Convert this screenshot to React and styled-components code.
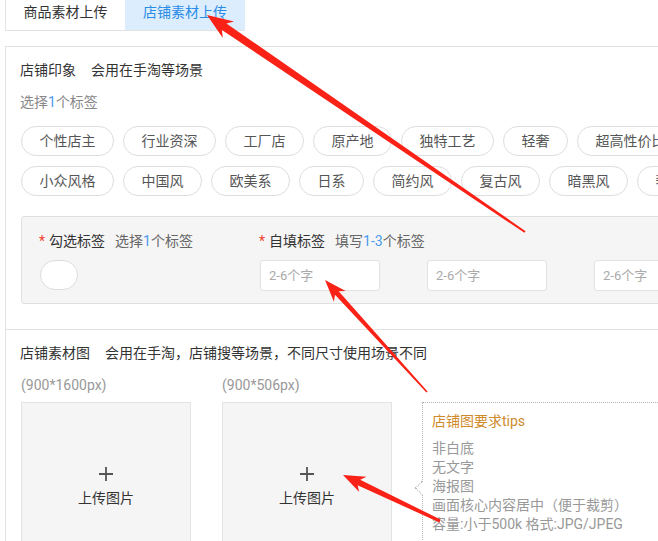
import React from "react";
import styled, { createGlobalStyle } from "styled-components";

const GlobalStyle = createGlobalStyle`
  body {
    margin: 0;
    background: #fff;
    overflow: hidden;
    font-family: Roboto, "Noto Sans CJK SC", sans-serif;
    color: #333;
  }
`;

const tagsRow1 = ["个性店主", "行业资深", "工厂店", "原产地", "独特工艺", "轻奢", "超高性价比"];
const tagsRow2 = ["小众风格", "中国风", "欧美系", "日系", "简约风", "复古风", "暗黑风", "奢华风"];
const tips = ["非白底", "无文字", "海报图", "画面核心内容居中（便于裁剪）", "容量:小于500k 格式:JPG/JPEG"];

// tip point, tail point, shaft width at head / tail
const arrows = [
  { tip: [207, 15], tail: [525, 232], w1: 8, w0: 2, head: 26, half: 10 },
  { tip: [325, 280], tail: [427, 392], w1: 5, w0: 1.5, head: 22, half: 8 },
  { tip: [343, 475], tail: [440, 521], w1: 6, w0: 3, head: 22, half: 8.5 },
];

function arrowPoints({ tip, tail, w1, w0, head, half }) {
  const dx = tail[0] - tip[0];
  const dy = tail[1] - tip[1];
  const len = Math.hypot(dx, dy);
  const ux = dx / len;
  const uy = dy / len;
  const nx = -uy;
  const ny = ux;
  const hb = [tip[0] + ux * head, tip[1] + uy * head];
  const b = [tip[0] + ux * head * 0.8, tip[1] + uy * head * 0.8];
  const pts = [
    tip,
    [hb[0] + nx * half, hb[1] + ny * half],
    [b[0] + (nx * w1) / 2, b[1] + (ny * w1) / 2],
    [tail[0] + (nx * w0) / 2, tail[1] + (ny * w0) / 2],
    [tail[0] - (nx * w0) / 2, tail[1] - (ny * w0) / 2],
    [b[0] - (nx * w1) / 2, b[1] - (ny * w1) / 2],
    [hb[0] - nx * half, hb[1] - ny * half],
  ];
  return pts.map((p) => p.map((v) => v.toFixed(1)).join(",")).join(" ");
}

function App() {
  return (
    <Page>
      <GlobalStyle />
      <TabBar>
        <Tab>商品素材上传</Tab>
        <Tab active>店铺素材上传</Tab>
      </TabBar>

      <Panel>
        <Section>
          <Title>
            店铺印象<Desc>会用在手淘等场景</Desc>
          </Title>
          <Hint>
            选择<Num>1</Num>个标签
          </Hint>
          <TagRows>
            <TagRow>
              {tagsRow1.map((t) => (
                <Tag key={t}>{t}</Tag>
              ))}
            </TagRow>
            <TagRow>
              {tagsRow2.map((t) => (
                <Tag key={t}>{t}</Tag>
              ))}
            </TagRow>
          </TagRows>

          <GrayBox>
            <Field width="220px">
              <Label>
                <Star>*</Star>勾选标签
                <LabelHint>
                  选择<Num>1</Num>个标签
                </LabelHint>
              </Label>
              <Controls>
                <Oval />
              </Controls>
            </Field>
            <Field>
              <Label>
                <Star>*</Star>自填标签
                <LabelHint>
                  填写<Num>1-3</Num>个标签
                </LabelHint>
              </Label>
              <Controls>
                <TextInput placeholder="2-6个字" />
                <TextInput placeholder="2-6个字" />
                <TextInput placeholder="2-6个字" />
              </Controls>
            </Field>
          </GrayBox>
        </Section>

        <Section divided>
          <Title>
            店铺素材图<Desc>会用在手淘，店铺搜等场景，不同尺寸使用场景不同</Desc>
          </Title>
          <Uploads>
            <UploadCol>
              <SizeLabel>(900*1600px)</SizeLabel>
              <UploadBox>
                <PlusIcon />
                <UploadText>上传图片</UploadText>
              </UploadBox>
            </UploadCol>
            <UploadCol>
              <SizeLabel>(900*506px)</SizeLabel>
              <UploadBox>
                <PlusIcon />
                <UploadText>上传图片</UploadText>
              </UploadBox>
            </UploadCol>
            <TipsBox>
              <TipsTitle>店铺图要求tips</TipsTitle>
              <TipsList>
                {tips.map((t) => (
                  <TipLine key={t}>{t}</TipLine>
                ))}
              </TipsList>
            </TipsBox>
          </Uploads>
        </Section>
      </Panel>

      <Overlay width="658" height="541" viewBox="0 0 658 541">
        {arrows.map((a, i) => (
          <polygon key={i} points={arrowPoints(a)} fill="#fa2216" />
        ))}
      </Overlay>
    </Page>
  );
}

function PlusIcon() {
  return (
    <svg width="14" height="14" viewBox="0 0 14 14">
      <path d="M7 0v14M0 7h14" stroke="#555" strokeWidth="1.8" />
    </svg>
  );
}

const Page = styled.div`
  position: relative;
  width: 658px;
  height: 541px;
  overflow: hidden;
  padding-left: 5px;
  box-sizing: border-box;
`;

const TabBar = styled.div`
  display: flex;
  width: 240px;
  height: 31px;
  box-sizing: border-box;
  border-left: 1px solid #e3e3e3;
  border-bottom: 1px solid #e3e3e3;
`;

const Tab = styled.div`
  width: ${(p) => (p.active ? "120px" : "119px")};
  height: 30px;
  line-height: 24px;
  text-align: center;
  font-size: 14px;
  color: ${(p) => (p.active ? "#2b8ce8" : "#333")};
  background: ${(p) => (p.active ? "#dcedfd" : "#fff")};
`;

const Panel = styled.div`
  margin-top: 15px;
  width: 720px;
  border: 1px solid #e3e3e3;
`;

const Section = styled.div`
  padding: 13px 15px 25px 14px;
  border-top: ${(p) => (p.divided ? "1px solid #e3e3e3" : "none")};
`;

const Title = styled.div`
  font-size: 14px;
  line-height: 20px;
  color: #333;
`;

const Desc = styled.span`
  margin-left: 15px;
`;

const Hint = styled.div`
  margin-top: 12px;
  font-size: 14px;
  line-height: 20px;
  color: #888;
`;

const Num = styled.span`
  color: #4a9af0;
`;

const TagRows = styled.div`
  margin-top: 14px;
  padding-left: 1px;
  display: flex;
  flex-direction: column;
  gap: 10px;
`;

const TagRow = styled.div`
  display: flex;
  gap: 9px;
`;

const Tag = styled.div`
  flex-shrink: 0;
  height: 30px;
  box-sizing: border-box;
  padding: 0 17.5px;
  border: 1px solid #dedede;
  border-radius: 15px;
  line-height: 28px;
  font-size: 14px;
  color: #555;
  white-space: nowrap;
`;

const GrayBox = styled.div`
  margin-top: 20px;
  margin-left: 1px;
  display: flex;
  padding: 14px 17px 12px;
  background: #f5f5f5;
  border: 1px solid #e0e0e0;
  border-radius: 3px;
`;

const Field = styled.div`
  width: ${(p) => p.width || "auto"};
  flex-shrink: 0;
`;

const Label = styled.div`
  font-size: 14px;
  line-height: 20px;
  color: #333;
  white-space: nowrap;
`;

const Star = styled.span`
  color: #f0422c;
  margin-right: 4px;
`;

const LabelHint = styled.span`
  margin-left: 10px;
  color: #666;
`;

const Controls = styled.div`
  margin-top: 9px;
  display: flex;
  gap: 46px;
`;

const Oval = styled.div`
  width: 38px;
  height: 30px;
  margin-left: 1px;
  box-sizing: border-box;
  border: 1px solid #dcdcdc;
  border-radius: 15px;
  background: #fff;
`;

const TextInput = styled.input`
  width: 120px;
  height: 31px;
  box-sizing: border-box;
  margin: 0 0 0 1px;
  padding: 0 8px;
  border: 1px solid #e2e2e2;
  border-radius: 3px;
  background: #fff;
  font-family: Roboto, "Noto Sans CJK SC", sans-serif;
  font-size: 13px;
  outline: none;
  &::placeholder {
    color: #aaa;
  }
`;

const Uploads = styled.div`
  margin-top: 12px;
  display: flex;
  gap: 31px;
  padding-left: 1px;
`;

const UploadCol = styled.div`
  width: 170px;
  flex-shrink: 0;
`;

const SizeLabel = styled.div`
  font-size: 14px;
  line-height: 20px;
  color: #999;
`;

const UploadBox = styled.div`
  margin-top: 7px;
  height: 170px;
  box-sizing: border-box;
  border: 1px solid #e3e3e3;
  background: #f5f5f5;
  display: flex;
  flex-direction: column;
  align-items: center;
  justify-content: center;
  gap: 8px;
`;

const UploadText = styled.div`
  font-size: 14px;
  line-height: 18px;
  color: #333;
`;

const TipsBox = styled.div`
  position: relative;
  margin-top: 27px;
  margin-left: -1px;
  width: 280px;
  height: 150px;
  box-sizing: border-box;
  padding: 8px 10px 8px 9px;
  border: 1px dotted #b5b5b5;
  &::before {
    content: "";
    position: absolute;
    left: -6px;
    top: 80px;
    width: 9px;
    height: 9px;
    background: #fff;
    border-left: 1px dotted #b5b5b5;
    border-bottom: 1px dotted #b5b5b5;
    transform: rotate(45deg);
  }
`;

const TipsTitle = styled.div`
  font-size: 14px;
  line-height: 20px;
  color: #cf8a2b;
`;

const TipsList = styled.div`
  margin-top: 8px;
`;

const TipLine = styled.div`
  font-size: 14px;
  line-height: 19px;
  color: #999;
  white-space: nowrap;
`;

const Overlay = styled.svg`
  position: absolute;
  top: 0;
  left: 0;
  pointer-events: none;
`;

export default App;
